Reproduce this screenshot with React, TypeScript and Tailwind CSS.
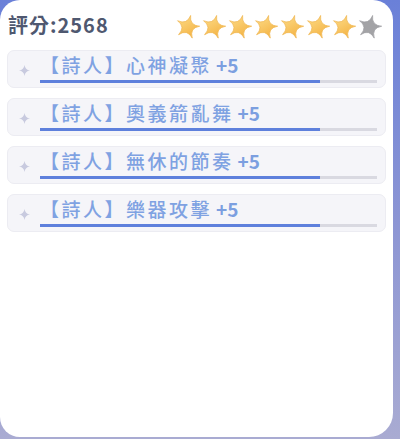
const skills = [
  { name: "【詩人】心神凝聚", bonus: 5, progress: 83 },
  { name: "【詩人】奧義箭亂舞", bonus: 5, progress: 83 },
  { name: "【詩人】無休的節奏", bonus: 5, progress: 83 },
  { name: "【詩人】樂器攻擊", bonus: 5, progress: 83 },
];

const cjk = { fontFamily: '"Noto Sans CJK TC", "Noto Sans", sans-serif' };

function Star({ lit }: { lit: boolean }) {
  return (
    <svg width="26" height="26" viewBox="0 0 24 24" className="rotate-[14deg]">
      <defs>
        <linearGradient id="gold" x1="0" y1="0" x2="1" y2="1">
          <stop offset="0%" stopColor="#fde08f" />
          <stop offset="100%" stopColor="#f3ad3a" />
        </linearGradient>
      </defs>
      <path
        d="M12 2 Q13.1 11.2 22.5 9.6 Q13.7 13.4 18.5 21.9 Q12 14.6 5.5 21.9 Q10.3 13.4 1.5 9.6 Q10.9 11.2 12 2 Z"
        fill={lit ? "url(#gold)" : "#a3a3a6"}
        stroke={lit ? "#f0b347" : "#9a9a9e"}
        strokeWidth="0.6"
        strokeLinejoin="round"
      />
    </svg>
  );
}

function Sparkle() {
  return (
    <svg width="11" height="11" viewBox="0 0 10 10">
      <path d="M5 0 Q5.6 4.4 10 5 Q5.6 5.6 5 10 Q4.4 5.6 0 5 Q4.4 4.4 5 0 Z" fill="#c8cadf" />
    </svg>
  );
}

export default function App() {
  return (
    <div className="w-[400px] h-[439px] bg-gradient-to-b from-[#6a80d8] via-[#8c95d4] to-[#a9abd2] pr-[7px] pb-[2px]">
      <div className="h-full bg-white rounded-[20px] rounded-br-[24px]" style={cjk}>
        <div className="flex items-center justify-between h-[50px] pl-[8px] pr-[10px]">
          <span className="text-[20px] font-bold text-[#4f5870] tracking-[1px]">評分:2568</span>
          <div className="flex items-center mt-[1px]">
            {Array.from({ length: 8 }, (_, i) => (
              <Star key={i} lit={i < 7} />
            ))}
          </div>
        </div>
        <div className="flex flex-col gap-[10px] px-[7px]">
          {skills.map((s) => (
            <div
              key={s.name}
              className="flex h-[38px] rounded-[7px] bg-[#f5f5f9] border border-[#ececf2]"
            >
              <div className="w-[32px] flex justify-center pt-[14px]">
                <Sparkle />
              </div>
              <div className="flex-1 pr-[8px] pt-[3px]">
                <div className="text-[19px] leading-[21px] font-medium text-[#7fa2e2] whitespace-nowrap tracking-[2.5px]">
                  {s.name}
                  <span className="ml-[4px] font-bold text-[#7c9fe0] tracking-normal">+{s.bonus}</span>
                </div>
                <div className="mt-[5px] h-[3px] bg-[#d9d9e1]">
                  <div className="h-full bg-[#5e80dc]" style={{ width: `${s.progress}%` }} />
                </div>
              </div>
            </div>
          ))}
        </div>
      </div>
    </div>
  );
}
